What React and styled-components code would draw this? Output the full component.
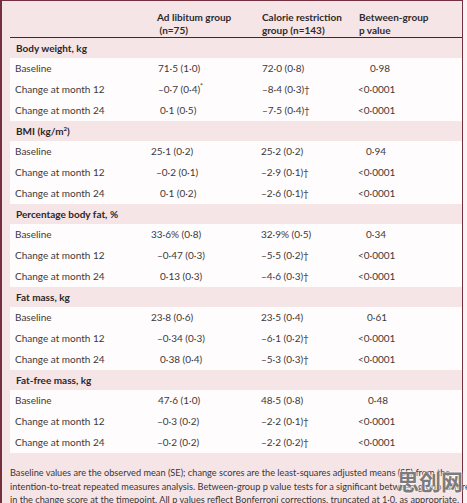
import React from "react";
import styled, { createGlobalStyle } from "styled-components";

const Global = createGlobalStyle`
  html, body { margin: 0; padding: 0; background: #fbf4f5; }
  body { font-family: Lato, "Noto Sans", sans-serif; color: #3a3536; }
`;

const Page = styled.div`
  width: 467px;
  height: 503px;
  overflow: hidden;
  position: relative;
  background: #fbf4f5;
`;

const Frame = styled.div`
  width: 452px;
  min-height: 520px;
  background: #f6e5e7;
  border-left: 2px solid #74303f;
  border-top: 1px solid #74303f;
  border-right: 1px solid #74303f;
  padding-left: 8px;
`;

const Grid = styled.div`
  display: grid;
  grid-template-columns: 141px 110px 97px 1fr;
`;

const HeadRow = styled.div`
  display: contents;
`;

const HeadCell = styled.div`
  padding: 10px 0 0 ${(p) => p.$indent || 0}px;
  height: 26px;
  font-size: 10px;
  line-height: 13px;
  font-weight: 700;
  color: #2f2a2b;
  border-bottom: 1px solid #3d2a2f;
  white-space: pre;
`;

const SectionTitle = styled.div`
  grid-column: 1 / -1;
  height: 20px;
  line-height: 20px;
  padding-left: 6px;
  font-size: 10px;
  font-weight: 700;
  color: #2c2728;
  sup { font-size: 6px; line-height: 0; }
`;

const Block = styled.div`
  grid-column: 1 / -1;
  display: grid;
  grid-template-columns: 141px 110px 97px 1fr;
  background: #fefcfc;
`;

const Cell = styled.div`
  height: 21px;
  line-height: 21px;
  font-size: 10px;
  color: #3e393a;
  white-space: pre;
  padding-left: ${(p) => p.$indent}px;
  sup { font-size: 7px; line-height: 0; }
`;

const Footnote = styled.div`
  padding: 13px 0 0 0;
  font-size: 9.2px;
  line-height: 13.5px;
  color: #3a3536;
`;

const FootLine = styled.div`
  white-space: nowrap;
`;

const Watermark = styled.div`
  position: absolute;
  left: 397px;
  top: 466px;
  display: flex;
  gap: 1px;
`;

const MarkChar = styled.span`
  display: block;
  width: 21px;
  height: 28px;
  font-family: "Noto Sans CJK SC", "Noto Sans CJK JP", sans-serif;
  font-size: 22px;
  font-weight: 700;
  line-height: 28px;
  text-align: center;
  color: rgba(100, 100, 100, 0.85);
  text-shadow: 0 0 2px #fff, 0 0 2px #fff;
`;

const c = (v, o) => ({ v, o });

const sections = [
  {
    title: "Body weight, kg",
    rows: [
      ["Baseline", c("71·5 (1·0)", 7), c("72·0 (0·8)", 1), c("0·98", 12)],
      ["Change at month 12", c("–0·7 (0·4)*", 7), c("–8·4 (0·3)†", 1), c("<0·0001", 0)],
      ["Change at month 24", c("0·1 (0·5)", 9), c("–7·5 (0·4)†", 1), c("<0·0001", 0)],
    ],
  },
  {
    title: (
      <>
        BMI (kg/m<sup>2</sup>)
      </>
    ),
    rows: [
      ["Baseline", c("25·1 (0·2)", 0), c("25·2 (0·2)", 0), c("0·94", 8)],
      ["Change at month 12", c("–0·2 (0·1)", 5), c("–2·9 (0·1)†", 0), c("<0·0001", 0)],
      ["Change at month 24", c("0·1 (0·2)", 9), c("–2·6 (0·1)†", 0), c("<0·0001", 0)],
    ],
  },
  {
    title: "Percentage body fat, %",
    rows: [
      ["Baseline", c("33·6% (0·8)", 0), c("32·9% (0·5)", 0), c("0·34", 8)],
      ["Change at month 12", c("–0·47 (0·3)", 6), c("–5·5 (0·2)†", 0), c("<0·0001", 0)],
      ["Change at month 24", c("0·13 (0·3)", 9), c("–4·6 (0·3)†", 0), c("<0·0001", 0)],
    ],
  },
  {
    title: "Fat mass, kg",
    rows: [
      ["Baseline", c("23·8 (0·6)", 0), c("23·5 (0·4)", 0), c("0·61", 9)],
      ["Change at month 12", c("–0·34 (0·3)", 6), c("–6·1 (0·2)†", 0), c("<0·0001", 0)],
      ["Change at month 24", c("0·38 (0·4)", 9), c("–5·3 (0·3)†", 0), c("<0·0001", 0)],
    ],
  },
  {
    title: "Fat-free mass, kg",
    rows: [
      ["Baseline", c("47·6 (1·0)", 7), c("48·5 (0·8)", 0), c("0·48", 10)],
      ["Change at month 12", c("–0·3 (0·2)", 6), c("–2·2 (0·1)†", 0), c("<0·0001", 0)],
      ["Change at month 24", c("–0·2 (0·2)", 6), c("–2·2 (0·2)†", 0), c("<0·0001", 0)],
    ],
  },
];

const footLines = [
  "Baseline values are the observed mean (SE); change scores are the least-squares adjusted means (SE) from the",
  "intention-to-treat repeated measures analysis. Between-group p value tests for a significant between-group difference",
  "in the change score at the timepoint. All p values reflect Bonferroni corrections, truncated at 1·0, as appropriate.",
];

const renderVal = (v) => {
  if (v.slice(-1) === "*") {
    return (
      <>
        {v.slice(0, -1)}
        <sup>*</sup>
      </>
    );
  }
  return v;
};

export default function App() {
  return (
    <Page>
      <Global />
      <Frame>
        <Grid>
          <HeadRow>
            <HeadCell />
            <HeadCell $indent={6}>{"Ad libitum group\n (n=75)"}</HeadCell>
            <HeadCell $indent={1}>{"Calorie restriction\ngroup (n=143)"}</HeadCell>
            <HeadCell $indent={1}>{"Between-group\np value"}</HeadCell>
          </HeadRow>
          {sections.map((s, i) => (
            <React.Fragment key={i}>
              <SectionTitle>{s.title}</SectionTitle>
              <Block>
                {s.rows.map((r, j) => (
                  <React.Fragment key={j}>
                    <Cell $indent={5}>{r[0]}</Cell>
                    <Cell $indent={r[1].o}>{renderVal(r[1].v)}</Cell>
                    <Cell $indent={r[2].o}>{renderVal(r[2].v)}</Cell>
                    <Cell $indent={r[3].o}>{renderVal(r[3].v)}</Cell>
                  </React.Fragment>
                ))}
              </Block>
            </React.Fragment>
          ))}
        </Grid>
        <Footnote>
          {footLines.map((l, i) => (
            <FootLine key={i}>{l}</FootLine>
          ))}
        </Footnote>
      </Frame>
      <Watermark>
        {["思", "创", "网"].map((ch) => (
          <MarkChar key={ch}>{ch}</MarkChar>
        ))}
      </Watermark>
    </Page>
  );
}
